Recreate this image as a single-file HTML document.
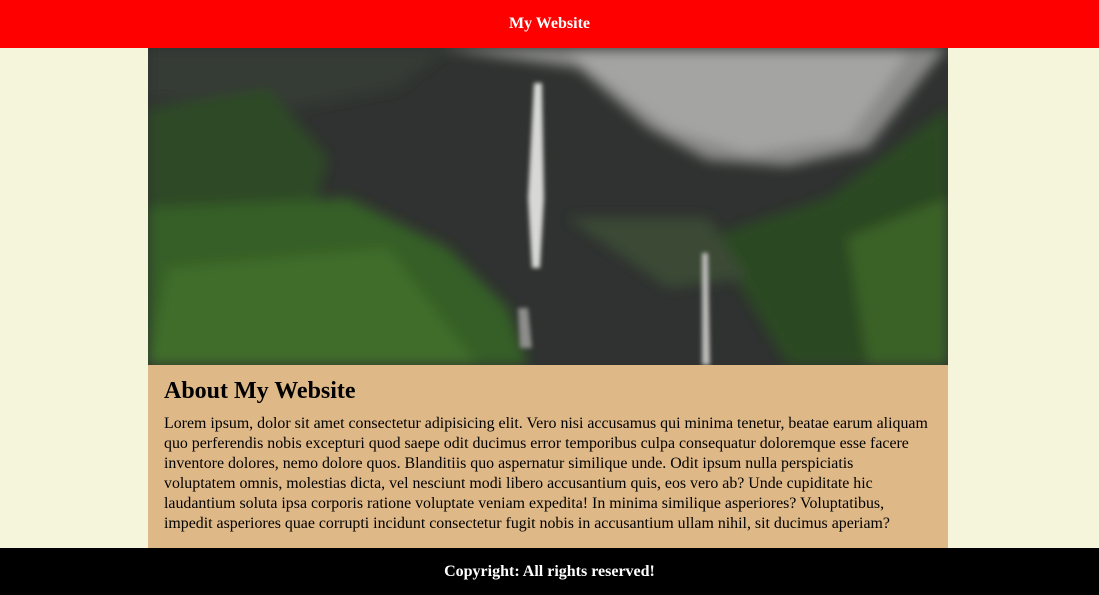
<!DOCTYPE html>
<html><head><meta charset="utf-8"><style>
*{margin:0;padding:0;box-sizing:border-box}
body{width:1099px;height:595px;background:#f5f5dc;font-family:"Liberation Serif",serif;overflow:hidden;position:relative}
header{height:48px;background:#ff0000;color:#fff;font-weight:bold;font-size:16px;text-align:center;line-height:47px}
.main{position:absolute;left:148px;top:48px;width:800px}
.img{height:317px;display:block}
.about{background:#deb887;height:183px;padding:12px 0 0 16px;overflow:hidden}
h2{font-size:24px;line-height:28px;margin-bottom:9px}
p{font-size:15.9px;line-height:20px;white-space:nowrap}
footer{position:absolute;left:0;top:548px;width:1099px;height:47px;background:#000;color:#fff;font-weight:bold;font-size:16px;text-align:center;line-height:47px}
</style></head><body>
<header>My Website</header>
<div class="main">
<svg class="img" width="800" height="317" viewBox="0 0 800 317">
<defs><filter id="b"><feGaussianBlur stdDeviation="6"/></filter><filter id="s"><feGaussianBlur stdDeviation="2"/></filter></defs>
<rect width="800" height="317" fill="#2f3230"/>
<g filter="url(#b)">
<path d="M290 0 L800 0 L790 10 L720 100 L640 118 L560 112 L500 80 L430 20 Z" fill="#8a8a88"/>
<path d="M420 5 L760 5 L700 90 L600 105 L520 80 Z" fill="#a4a4a2"/>
<path d="M0 0 L300 0 L250 40 L150 60 L0 50 Z" fill="#363a36"/>
<path d="M0 60 L120 40 L180 110 L160 180 L0 200 Z" fill="#2f4a25"/>
<path d="M0 160 L200 150 L300 200 L360 260 L380 317 L0 317 Z" fill="#355e25"/>
<path d="M20 220 L240 200 L330 317 L0 317 Z" fill="#3f6d2a"/>
<path d="M560 190 L680 150 L760 90 L800 60 L800 317 L640 317 L600 250 Z" fill="#2c4a24"/>
<path d="M700 190 L800 150 L800 317 L720 317 Z" fill="#3b6228"/>
<path d="M420 170 L560 170 L600 230 L520 240 Z" fill="#3a4a34"/>
</g>
<g filter="url(#s)">
<path d="M386 35 L394 35 L396 150 L392 220 L384 220 L380 150 Z" fill="#d8d8d6"/>
<path d="M554 205 L560 205 L562 317 L554 317 Z" fill="#bdbdbb"/>
<path d="M370 260 L380 260 L384 300 L372 300 Z" fill="#8c8c8a"/>
</g>
</svg>
<div class="about">
<h2>About My Website</h2>
<p>Lorem ipsum, dolor sit amet consectetur adipisicing elit. Vero nisi accusamus qui minima tenetur, beatae earum aliquam<br>quo perferendis nobis excepturi quod saepe odit ducimus error temporibus culpa consequatur doloremque esse facere<br>inventore dolores, nemo dolore quos. Blanditiis quo aspernatur similique unde. Odit ipsum nulla perspiciatis<br>voluptatem omnis, molestias dicta, vel nesciunt modi libero accusantium quis, eos vero ab? Unde cupiditate hic<br>laudantium soluta ipsa corporis ratione voluptate veniam expedita! In minima similique asperiores? Voluptatibus,<br>impedit asperiores quae corrupti incidunt consectetur fugit nobis in accusantium ullam nihil, sit ducimus aperiam?</p>
</div>
</div>
<footer>Copyright: All rights reserved!</footer>
</body></html>
